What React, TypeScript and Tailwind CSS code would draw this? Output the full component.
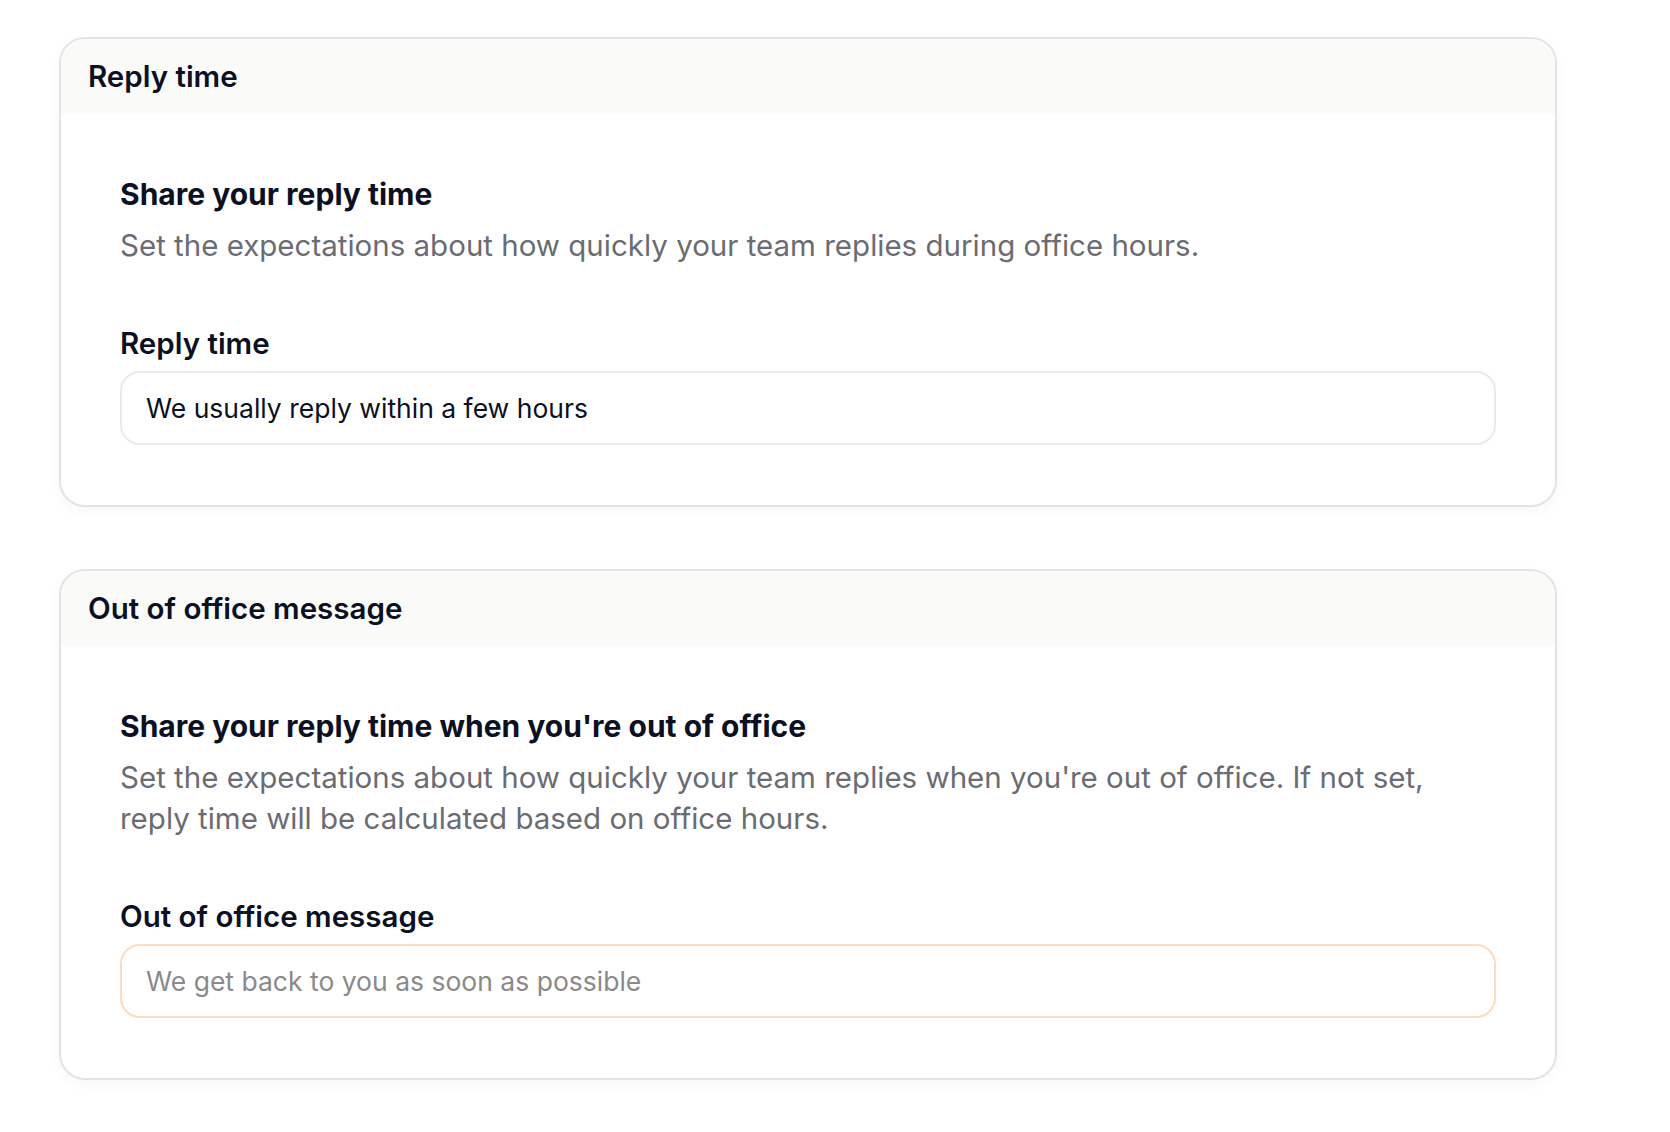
export default function App() {
  return (
    <div className="min-h-screen bg-white font-['Inter','Noto_Sans',sans-serif] text-[#0b1023]">
      <div className="ml-[59px] pt-[37px] w-[1498px] flex flex-col gap-[62px]">
        <Card
          title="Reply time"
          heading="Share your reply time"
          description="Set the expectations about how quickly your team replies during office hours."
          label="Reply time"
          value="We usually reply within a few hours"
        />
        <Card
          title="Out of office message"
          heading="Share your reply time when you're out of office"
          description="Set the expectations about how quickly your team replies when you're out of office. If not set, reply time will be calculated based on office hours."
          label="Out of office message"
          placeholder="We get back to you as soon as possible"
          highlight
        />
      </div>
    </div>
  )
}

type CardProps = {
  title: string
  heading: string
  description: string
  label: string
  value?: string
  placeholder?: string
  highlight?: boolean
}

function Card({ title, heading, description, label, value, placeholder, highlight }: CardProps) {
  return (
    <section className="border-2 border-[#e4e4e4] rounded-[26px] overflow-hidden shadow-[0_4px_14px_rgba(0,0,0,0.03)]">
      <header className="bg-[#fafaf9] h-[75px] flex items-center px-[27px]">
        <h2 className="text-[29.5px] font-semibold">{title}</h2>
      </header>
      <div className="px-[59px] pt-[61px] pb-[60px]">
        <h3 className="text-[30px] font-bold leading-[38px]">{heading}</h3>
        <p className="mt-[12px] text-[29.5px] leading-[41px] text-[#6b6b73] max-w-[1345px]">{description}</p>
        <label className="block mt-[58px] text-[29.5px] font-semibold leading-[38px]">{label}</label>
        <input
          className={`mt-[9px] w-full h-[74px] rounded-[20px] border-2 px-[24px] text-[26.5px] outline-none placeholder:text-[#8a8a8a] ${
            highlight ? 'border-[#fcdcc1]' : 'border-[#ebebe6]'
          }`}
          defaultValue={value}
          placeholder={placeholder}
        />
      </div>
    </section>
  )
}
